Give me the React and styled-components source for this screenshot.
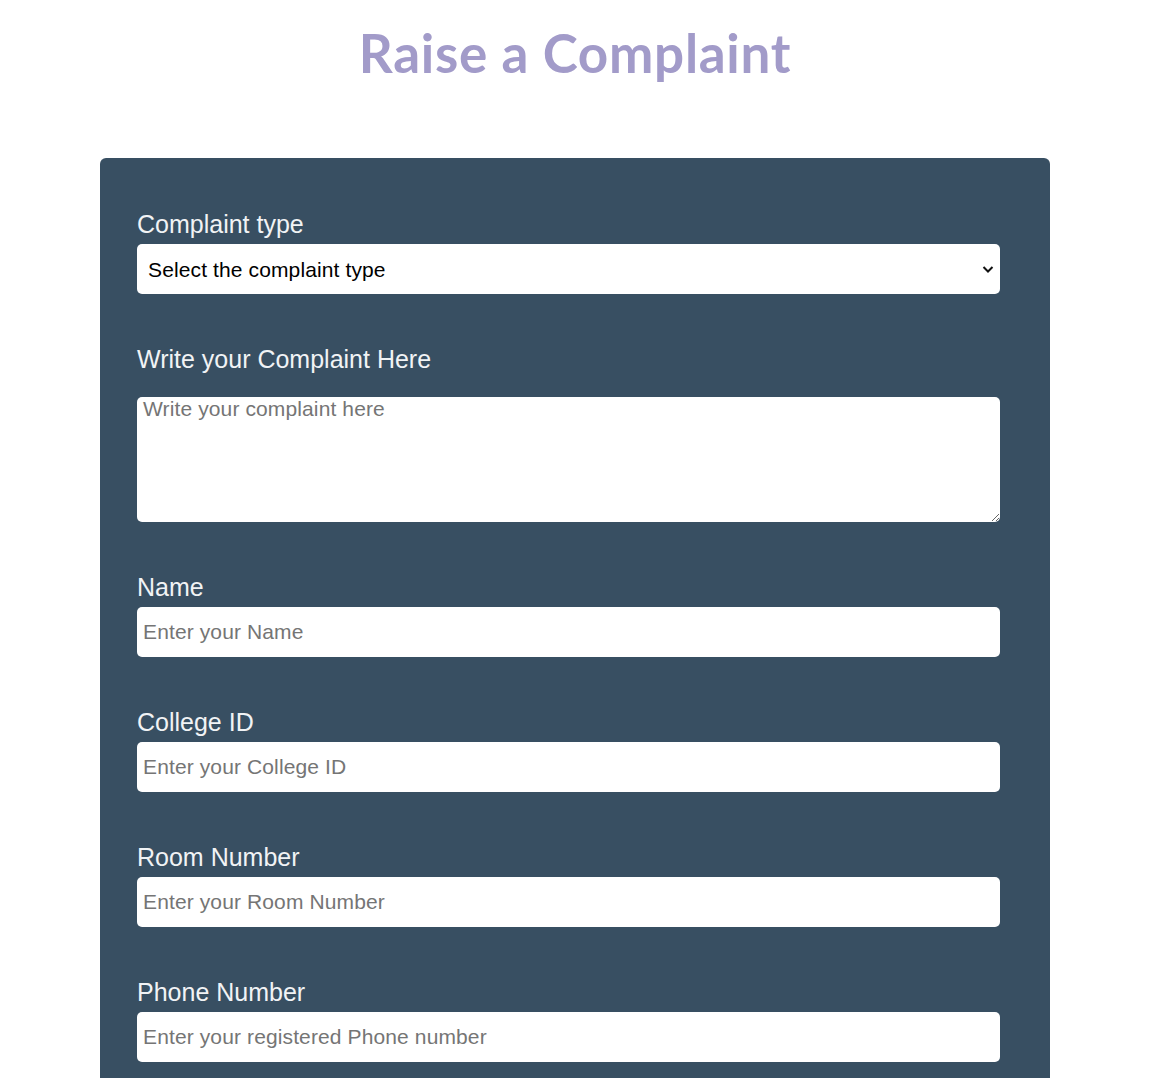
import React from "react";
import styled, { createGlobalStyle } from "styled-components";

const Global = createGlobalStyle`
  html, body { margin: 0; padding: 0; background: #ffffff; }
  body { font-family: "Liberation Sans", Arial, sans-serif; }
  * { box-sizing: border-box; }
`;

const Page = styled.div`
  width: 950px;
  margin-left: 100px;
  display: flex;
  flex-direction: column;
`;

const Title = styled.h1`
  margin: 21px 0 74px;
  text-align: center;
  font-family: Lato, "Open Sans", sans-serif;
  font-weight: 700;
  font-size: 53px;
  line-height: 63px;
  color: #a29bc9;
  letter-spacing: 0.7px;
`;

const Card = styled.form`
  background: #384f62;
  border-radius: 6px 6px 0 0;
  padding: 52px 50px 40px 37px;
  display: flex;
  flex-direction: column;
  gap: 51px;
`;

const Field = styled.div`
  display: flex;
  flex-direction: column;
`;

const Label = styled.label`
  color: #f1f3f5;
  font-family: "Liberation Sans", Arial, sans-serif;
  font-size: 25px;
  line-height: 28px;
  margin-bottom: ${(p) => p.$gap || 6}px;
`;

const controlBase = `
  width: 863px;
  border: none;
  outline: none;
  background: #ffffff;
  border-radius: 5px;
  font-family: "Liberation Sans", Arial, sans-serif;
  font-size: 21px;
  letter-spacing: 0.12px;
  color: #000;
  &::placeholder { color: #757575; opacity: 1; }
`;

const Input = styled.input`
  ${controlBase}
  height: 50px;
  padding: 0 6px;
`;

const TextArea = styled.textarea`
  ${controlBase}
  height: 125px;
  padding: 0 6px;
  line-height: 24px;
  display: block;
`;

const SelectWrap = styled.div`
  position: relative;
  width: 863px;
`;

const Select = styled.select`
  ${controlBase}
  height: 50px;
  padding: 0 11px;
  appearance: none;
  -webkit-appearance: none;
  display: block;
`;

const Chevron = styled.svg`
  position: absolute;
  right: 6px;
  top: 19px;
  pointer-events: none;
`;

export default function App() {
  return (
    <>
      <Global />
      <Page>
        <Title>Raise a Complaint</Title>
        <Card onSubmit={(e) => e.preventDefault()}>
          <Field>
            <Label htmlFor="type">Complaint type</Label>
            <SelectWrap>
              <Select id="type" defaultValue="">
                <option value="">Select the complaint type</option>
                <option value="electrical">Electrical</option>
                <option value="plumbing">Plumbing</option>
                <option value="cleaning">Cleaning</option>
              </Select>
              <Chevron width="12" height="12" viewBox="0 0 12 12">
                <path d="M1.5 4 L6 8.5 L10.5 4" fill="none" stroke="#111" strokeWidth="2" />
              </Chevron>
            </SelectWrap>
          </Field>
          <Field>
            <Label htmlFor="complaint" $gap={24}>Write your Complaint Here</Label>
            <TextArea id="complaint" placeholder="Write your complaint here" />
          </Field>
          <Field>
            <Label htmlFor="name">Name</Label>
            <Input id="name" placeholder="Enter your Name" />
          </Field>
          <Field>
            <Label htmlFor="cid">College ID</Label>
            <Input id="cid" placeholder="Enter your College ID" />
          </Field>
          <Field>
            <Label htmlFor="room">Room Number</Label>
            <Input id="room" placeholder="Enter your Room Number" />
          </Field>
          <Field>
            <Label htmlFor="phone">Phone Number</Label>
            <Input id="phone" placeholder="Enter your registered Phone number" />
          </Field>
        </Card>
      </Page>
    </>
  );
}
